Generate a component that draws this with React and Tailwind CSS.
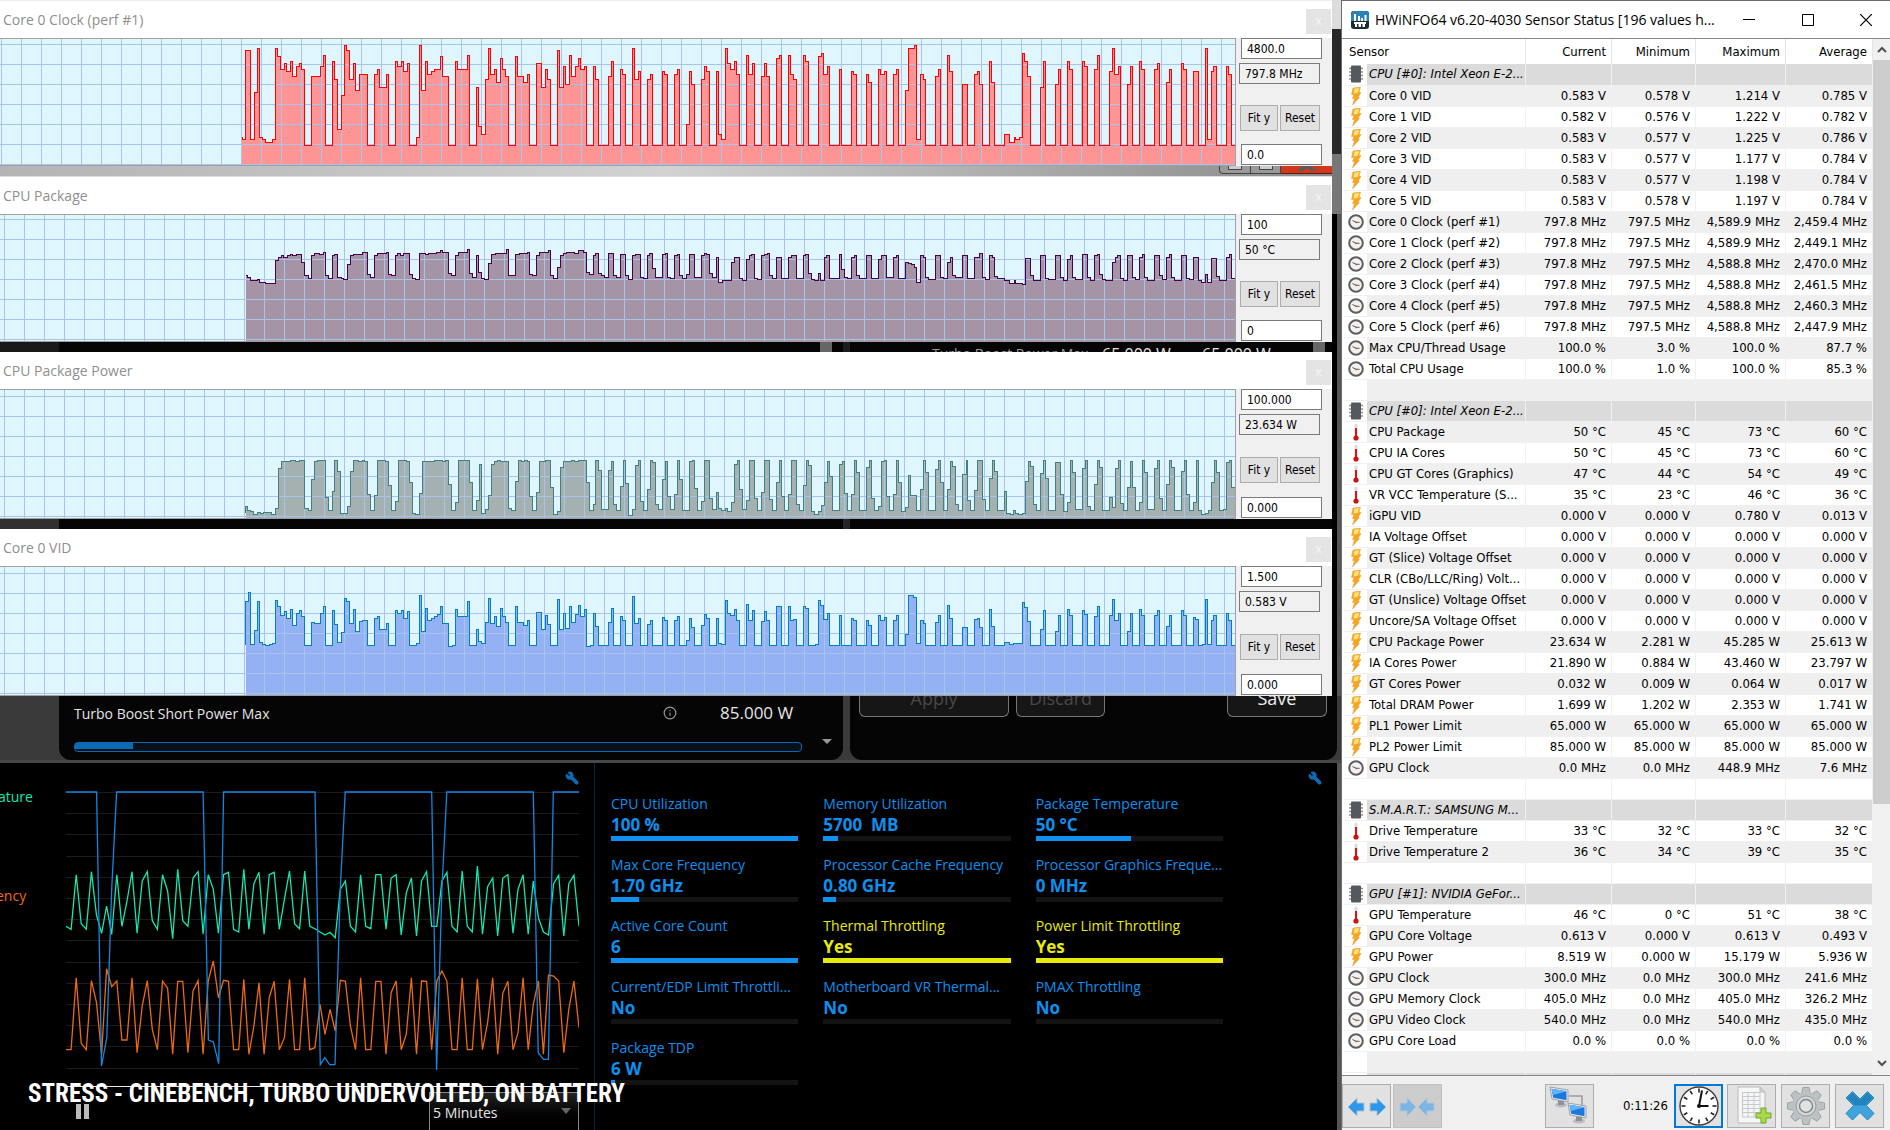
import React from 'react';
import { Wrench, Info } from 'lucide-react';

// One trace unit is 1/2.24 px across and 1/3 px down; HALF is where the second block of samples starts
const SCALE_X = 2.24;
const SCALE_Y = 3;
const HALF = 1434;
const PLOT_WIDTH = 1235;

const clockTrace = {
  first: [541,412, 543,418, 550,151, 561,418, 570,277, 577,145, 581,412, 588,418, 595,427, 611,418, 617,145, 621,169, 628,208, 637,190, 642,214, 651,184, 655,229, 664,199, 671,190, 676,208, 682,436, 698,229, 718,199, 725,166, 729,436, 745,184, 749,238, 756,388, 765,286, 772,136, 776,151, 783,238, 792,190, 796,271, 805,223, 823,436, 839,223, 845,208, 850,262, 866,223, 870,436, 886,184, 891,199, 899,184, 904,214, 913,190, 917,436, 933,412, 940,136, 944,271, 953,184, 957,223, 966,214, 973,208, 987,169, 991,229, 1005,436, 1020,184, 1025,208, 1047,166, 1052,436, 1067,262, 1072,379, 1078,403, 1088,238, 1094,145, 1099,223, 1108,208, 1112,247, 1121,175, 1125,208, 1132,229, 1139,436, 1155,169, 1159,229, 1173,247, 1181,223, 1186,436, 1202,190, 1213,262, 1222,208, 1226,238, 1233,436, 1249,151, 1253,262, 1262,199, 1267,253, 1276,166, 1280,229, 1289,199, 1296,175, 1300,208, 1309,199, 1314,436, 1329,199, 1334,238, 1341,436, 1363,229, 1370,184, 1374,436, 1390,208, 1394,223, 1401,436, 1417,145, 1421,238, 1430,214, 1435,436, 1450,238, 1457,223, 1461,436, 1484,214, 1488,223, 1495,436, 1511,223, 1517,208, 1522,436, 1538,373, 1544,214, 1549,253, 1556,436],
  second: [138,238, 144,199, 148,214, 156,436, 171,214, 176,403, 182,418, 191,145, 196,190, 203,208, 212,184, 216,223, 223,436, 238,166, 243,223, 252,190, 257,436, 272,229, 279,190, 283,229, 290,436, 305,175, 312,166, 317,436, 332,166, 337,223, 344,238, 351,436, 366,166, 371,184, 377,436, 400,169, 406,160, 411,223, 420,199, 424,436, 447,208, 451,436, 474,214, 478,223, 485,436, 507,223, 512,247, 518,436, 534,208, 539,223, 548,214, 552,436, 568,223, 574,208, 579,436, 595,271, 601,145, 614,136, 619,418, 628,223, 634,238, 640,436, 662,229, 668,208, 673,436, 689,166, 693,214, 700,436, 723,253, 734,436, 749,223, 756,214, 761,253, 767,436, 782,184, 787,247, 794,436, 816,403, 827,427, 838,412, 841,418, 850,412, 857,160, 861,184, 868,229, 875,436, 897,262, 904,184, 908,436, 931,253, 937,208, 942,436, 957,184, 962,208, 969,436, 991,184, 996,199, 1003,436, 1018,208, 1025,166, 1029,436, 1052,214, 1058,145, 1063,223, 1072,199, 1076,436, 1092,253, 1099,199, 1103,436, 1119,184, 1123,208, 1130,436, 1152,208, 1159,190, 1164,436, 1179,247, 1186,208, 1190,436, 1213,190, 1217,208, 1224,436, 1240,214, 1251,436, 1267,145, 1271,418, 1280,214, 1285,199, 1291,436, 1314,199, 1318,223, 1325,436],
};

const packageTrace = {
  first: [549,826, 554,832, 561,841, 577,838, 581,847, 595,850, 617,781, 624,772, 630,766, 635,772, 644,766, 651,763, 655,766, 664,763, 675,787, 682,826, 690,835, 698,766, 704,760, 716,763, 725,757, 729,826, 736,835, 745,766, 750,763, 756,832, 765,835, 770,838, 778,793, 785,766, 792,763, 802,763, 811,757, 823,823, 830,832, 839,766, 846,760, 866,757, 870,823, 877,826, 886,766, 891,760, 897,766, 904,760, 917,823, 924,835, 931,838, 940,760, 953,763, 960,760, 978,757, 987,751, 991,757, 1005,820, 1011,826, 1020,766, 1027,757, 1047,748, 1052,820, 1058,832, 1067,766, 1072,817, 1078,835, 1085,838, 1094,790, 1101,763, 1110,760, 1134,748, 1139,826, 1155,763, 1163,760, 1181,757, 1186,823, 1193,826, 1202,766, 1208,757, 1229,751, 1233,826, 1240,835, 1249,802, 1255,766, 1262,760, 1269,757, 1287,760, 1296,751, 1307,757, 1314,817, 1321,823, 1329,766, 1335,760, 1341,820, 1347,826, 1354,832, 1363,760, 1374,826, 1381,832, 1390,763, 1401,826, 1408,838, 1417,766, 1423,763, 1435,832, 1441,835, 1450,766, 1455,760, 1461,805, 1468,832, 1484,763, 1490,760, 1495,832, 1502,835, 1511,766, 1517,763, 1522,826, 1529,835, 1538,823, 1544,763, 1556,832],
  second: [138,766, 144,760, 149,763, 156,820, 162,832, 171,772, 176,847, 185,841, 196,841, 205,787, 212,772, 223,835, 230,841, 238,778, 245,766, 250,763, 257,835, 263,838, 272,766, 279,763, 285,760, 290,826, 297,835, 305,772, 317,835, 332,772, 339,766, 351,835, 366,766, 371,763, 377,820, 384,838, 391,841, 400,820, 404,841, 413,772, 418,766, 424,835, 447,763, 451,808, 458,832, 465,835, 474,772, 480,766, 485,826, 491,835, 507,766, 518,835, 534,778, 541,766, 552,832, 568,772, 574,766, 579,835, 595,787, 601,790, 607,793, 614,802, 619,847, 628,766, 634,772, 640,832, 646,838, 662,766, 673,832, 680,835, 689,787, 695,772, 700,826, 706,832, 723,766, 734,835, 749,772, 761,760, 767,832, 774,838, 782,766, 789,772, 794,829, 801,835, 816,841, 827,850, 838,841, 841,850, 857,853, 863,775, 875,826, 882,841, 897,766, 908,835, 914,838, 931,766, 942,832, 948,841, 957,778, 963,766, 969,832, 976,838, 991,763, 1003,832, 1009,841, 1018,766, 1025,763, 1029,823, 1036,838, 1042,841, 1058,787, 1065,772, 1070,766, 1076,835, 1083,841, 1092,766, 1103,832, 1110,838, 1119,772, 1125,763, 1130,832, 1137,841, 1152,766, 1164,826, 1170,838, 1179,772, 1186,763, 1190,832, 1197,841, 1213,766, 1224,835, 1231,838, 1240,772, 1251,841, 1257,847, 1267,823, 1271,847, 1280,775, 1291,829, 1298,841, 1314,772, 1320,763, 1325,835],
};

const powerTrace = {
  first: [549,517, 551,499, 554,511, 561,514, 568,523, 577,517, 583,520, 590,517, 608,523, 617,505, 624,385, 630,364, 651,361, 662,364, 671,361, 682,505, 690,511, 698,418, 704,364, 711,361, 729,472, 736,511, 745,454, 750,361, 756,394, 763,520, 778,499, 785,394, 792,361, 802,364, 811,361, 817,364, 823,463, 830,511, 839,466, 845,361, 864,364, 870,436, 877,511, 886,484, 893,361, 911,364, 917,427, 924,520, 931,523, 940,460, 946,364, 973,361, 991,364, 998,361, 1005,433, 1011,511, 1020,487, 1027,361, 1052,427, 1058,511, 1067,481, 1074,373, 1078,520, 1088,508, 1094,466, 1101,373, 1108,364, 1114,361, 1121,364, 1139,505, 1146,511, 1155,424, 1161,361, 1168,364, 1175,361, 1181,364, 1186,469, 1193,511, 1202,457, 1208,364, 1222,361, 1233,442, 1240,523, 1249,514, 1255,382, 1262,364, 1280,361, 1287,364, 1296,361, 1314,427, 1321,511, 1329,493, 1335,361, 1341,391, 1347,508, 1363,391, 1370,364, 1374,493, 1381,511, 1390,439, 1397,361, 1401,430, 1408,526, 1417,508, 1423,376, 1430,361, 1435,484, 1441,511, 1450,448, 1457,361, 1461,367, 1468,493, 1475,508, 1484,418, 1490,364, 1495,469, 1502,508, 1511,463, 1517,361, 1522,418, 1529,511, 1544,364, 1551,361, 1556,445, 1562,511],
  second: [138,484, 144,361, 156,475, 162,508, 171,457, 176,505, 182,511, 192,505, 196,514, 205,487, 212,373, 218,361, 223,448, 230,508, 238,481, 245,361, 257,475, 263,511, 272,457, 279,361, 290,478, 297,511, 305,427, 312,361, 317,469, 323,511, 332,463, 339,361, 351,493, 357,511, 366,436, 372,361, 377,376, 384,514, 391,523, 400,514, 406,496, 413,427, 419,364, 424,409, 431,511, 447,373, 453,364, 458,460, 465,511, 474,463, 480,361, 485,397, 491,511, 507,382, 514,361, 518,475, 525,511, 534,499, 541,364, 547,361, 552,469, 558,511, 568,463, 574,361, 579,427, 585,514, 595,502, 601,406, 606,466, 619,511, 628,448, 635,361, 640,397, 646,511, 662,388, 668,361, 673,427, 680,511, 689,448, 695,364, 700,379, 706,493, 713,511, 723,403, 730,361, 734,481, 740,511, 749,451, 756,361, 767,478, 774,511, 782,415, 789,361, 794,394, 801,511, 816,454, 821,520, 830,523, 837,511, 841,520, 848,523, 857,520, 863,424, 870,364, 875,379, 882,493, 888,511, 897,400, 904,361, 908,415, 915,511, 931,367, 942,463, 948,514, 957,487, 963,361, 969,397, 976,508, 991,385, 998,361, 1003,499, 1009,511, 1018,433, 1025,361, 1029,382, 1036,511, 1052,472, 1058,502, 1065,385, 1072,361, 1076,490, 1083,511, 1092,442, 1099,364, 1103,442, 1110,511, 1119,487, 1125,361, 1130,397, 1137,508, 1152,385, 1159,361, 1164,475, 1170,511, 1179,433, 1186,361, 1190,382, 1197,511, 1213,394, 1220,361, 1224,463, 1231,511, 1240,487, 1247,361, 1251,511, 1258,523, 1267,520, 1274,511, 1280,427, 1286,361, 1291,397, 1298,511, 1307,508, 1314,367, 1320,361, 1325,442],
};

const vidTrace = {
  first: [549,913, 550,784, 556,757, 561,913, 570,871, 577,784, 581,907, 588,913, 595,916, 604,913, 611,910, 617,781, 621,799, 628,826, 637,814, 642,835, 651,808, 655,856, 664,820, 671,811, 676,829, 682,916, 698,847, 704,850, 718,820, 725,799, 729,916, 745,811, 749,853, 756,907, 765,877, 772,775, 776,784, 783,850, 792,808, 796,874, 805,844, 812,841, 823,916, 839,835, 845,829, 850,868, 866,850, 870,916, 886,811, 891,820, 899,811, 904,835, 913,814, 917,916, 933,910, 940,766, 944,874, 953,805, 957,841, 966,835, 973,829, 980,823, 987,799, 991,850, 1005,919, 1013,916, 1020,808, 1025,829, 1047,784, 1052,916, 1067,868, 1072,904, 1078,910, 1088,847, 1094,775, 1099,850, 1108,829, 1112,859, 1121,805, 1125,829, 1132,847, 1139,916, 1155,799, 1159,847, 1173,856, 1181,841, 1186,916, 1202,817, 1213,868, 1222,826, 1226,853, 1233,916, 1249,778, 1253,868, 1262,820, 1267,865, 1276,799, 1280,847, 1289,823, 1296,796, 1300,829, 1309,808, 1314,919, 1323,916, 1329,820, 1334,859, 1341,916, 1363,847, 1370,805, 1374,916, 1390,829, 1394,841, 1401,916, 1417,769, 1421,850, 1430,835, 1435,916, 1450,853, 1457,841, 1461,916, 1484,832, 1488,841, 1495,916, 1511,841, 1517,829, 1522,916, 1538,901, 1544,835, 1549,862, 1556,916],
  second: [138,856, 144,823, 149,835, 156,916, 171,835, 176,910, 182,913, 191,781, 196,820, 203,826, 212,808, 216,841, 223,916, 238,793, 243,841, 252,811, 257,916, 272,844, 279,814, 283,841, 290,916, 305,799, 317,916, 332,799, 337,841, 344,838, 351,916, 366,799, 371,805, 377,916, 393,913, 400,781, 404,796, 411,838, 420,820, 424,916, 447,826, 451,916, 474,835, 478,841, 485,916, 507,841, 512,856, 518,916, 534,826, 539,841, 548,832, 552,916, 568,841, 574,826, 579,916, 595,883, 601,766, 613,772, 619,910, 628,841, 634,850, 640,916, 662,847, 668,826, 673,916, 689,796, 693,835, 700,916, 723,862, 734,916, 749,838, 756,835, 761,862, 767,916, 782,808, 787,859, 794,916, 816,907, 828,913, 837,910, 857,787, 861,802, 868,844, 875,916, 897,868, 904,811, 908,916, 931,874, 937,826, 942,916, 957,808, 962,826, 969,916, 991,811, 996,823, 1003,916, 1018,829, 1025,799, 1029,916, 1052,826, 1058,778, 1063,841, 1072,820, 1076,916, 1092,874, 1099,820, 1103,916, 1119,808, 1123,826, 1130,916, 1152,826, 1159,811, 1164,916, 1179,859, 1186,826, 1190,916, 1213,811, 1217,826, 1224,916, 1240,832, 1245,838, 1251,916, 1260,913, 1267,778, 1271,913, 1280,841, 1285,826, 1291,916, 1314,820, 1318,841, 1325,916],
};

const graphs = [
  { title: 'Core 0 Clock (perf #1)', max: '4800.0', value: '797.8 MHz', min: '0.0', trace: clockTrace, base: 117, height: 126, gridX: 1, gridY: 5, fill: '#ff9494', stroke: '#ff0000' },
  { title: 'CPU Package', max: '100', value: '50 °C', min: '0', trace: packageTrace, base: 645, height: 126, gridX: 4, gridY: 4, fill: '#a594a5', stroke: '#480048' },
  { title: 'CPU Package Power', max: '100.000', value: '23.634 W', min: '0.000', trace: powerTrace, base: 150, height: 128, gridX: 4, gridY: 6, fill: '#a5b1b1', stroke: '#408080' },
  { title: 'Core 0 VID', max: '1.500', value: '0.583 V', min: '0.000', trace: vidTrace, base: 681, height: 128, gridX: 4, gridY: 6, fill: '#94b1f3', stroke: '#0080c0' },
];

// Turn a trace into a stepped line in plot pixels
const stepPath = (trace, base) => {
  const all = [...trace.first, ...trace.second.map((n, i) => (i % 2 === 0 ? n + HALF : n))];
  let d = '';
  for (let i = 0; i < all.length; i += 2) {
    const x = Math.floor(all[i] / SCALE_X) + 0.5;
    const y = Math.floor((all[i + 1] - base) / SCALE_Y) + 0.5;
    d += i === 0 ? `M${x} ${y}` : `H${x}V${y}`;
  }
  return { line: `${d}H${PLOT_WIDTH}`, left: Math.floor(all[0] / SCALE_X) + 0.5 };
};

const Plot = ({ graph }) => {
  const { trace, base, height, gridX, gridY, fill, stroke } = graph;
  const { line, left } = stepPath(trace, base);
  const columns = Array.from({ length: 62 }, (_, i) => gridX + i * 20);
  const rows = Array.from({ length: 7 }, (_, i) => gridY + i * 20);
  return (
    <svg
      className="block w-full bg-[#dff6fe]"
      height={height}
      viewBox={`0 0 ${PLOT_WIDTH} ${height}`}
      preserveAspectRatio="none"
      shapeRendering="crispEdges"
    >
      <path d={`${line}V${height}H${left}Z`} fill={fill} />
      {columns.map((x) => (
        <rect key={x} x={x} y="0" width="1" height={height} fill="#a9c4ea" />
      ))}
      {rows.map((y) => (
        <rect key={y} x="0" y={y} width={PLOT_WIDTH} height="1" fill="#a9c4ea" />
      ))}
      <path d={line} fill="none" stroke={stroke} />
    </svg>
  );
};

const GraphWindow = ({ graph }) => (
  <section className="bg-white">
    <div className="flex h-[37px] items-center justify-between pl-[3px] font-['Open_Sans',sans-serif]">
      <h2 className="text-[14px] text-[#8f8f8f]">{graph.title}</h2>
      <button aria-label="Close" className="mt-1 mr-px h-[25px] w-[25px] bg-[#e4e4e4] pb-0.5 text-[12px] text-[#f6f6f6]">x</button>
    </div>
    <div className="flex bg-[#f0f0f0]">
      <div className="min-w-0 flex-1 border-y border-r border-[#a0a0a0]">
        <Plot graph={graph} />
      </div>
      <div className="flex w-[96px] shrink-0 flex-col justify-between pr-3 pb-px pl-[3px] text-[12px]">
        <div>
          <input aria-label={`${graph.title} maximum`} defaultValue={graph.max} className="ml-0.5 block h-[21px] w-[81px] border border-[#7a7a7a] bg-white px-[5px] text-black" />
          <input aria-label={`${graph.title} value`} readOnly value={graph.value} className="mt-1 block h-[21px] w-[81px] border border-[#7a7a7a] bg-[#f0f0f0] px-[5px] text-black" />
        </div>
        <div className="mt-2 ml-px flex gap-0.5">
          <button className="h-[26px] w-[38px] border border-[#adadad] bg-[#e1e1e1]">Fit y</button>
          <button className="h-[26px] w-10 border border-[#adadad] bg-[#e1e1e1]">Reset</button>
        </div>
        <input aria-label={`${graph.title} minimum`} defaultValue={graph.min} className="ml-0.5 block h-[21px] w-[81px] border border-[#7a7a7a] bg-white px-[5px] text-black" />
      </div>
    </div>
  </section>
);

// Parts of the windows behind that show between the graph windows
const GlassStrip = () => (
  <div className="flex h-[11px] justify-end overflow-hidden border-b border-[#dcdcdc] bg-linear-to-r from-[#b4b4b4] via-[#d2d2d2] to-[#8a8a8a]">
    <div className="h-2 w-8 rounded-bl border border-t-0 border-[#444] bg-[#999]">
      <div className="mx-auto h-1 w-3.5 border border-t-0 border-[#444] bg-[#ccc]" />
    </div>
    <div className="h-2 w-[30px] border-r border-b border-[#444] bg-[#999]">
      <div className="mx-auto h-1 w-3.5 border border-t-0 border-[#444] bg-[#ccc]" />
    </div>
    <div className="h-2 w-[51px] border-b border-[#5a1a10] bg-[#d0381c]">
      <svg className="mx-auto block" width="20" height="5" viewBox="0 0 20 5">
        <path d="M0 5L6 0H14L20 5H14L10 2L6 5Z" fill="#5b5b5b" />
      </svg>
    </div>
  </div>
);

const PowerStrip = () => (
  <div className="flex h-2.5 overflow-hidden bg-[#050505] font-['Open_Sans',sans-serif] text-[16px] leading-5 text-[#e5e5e5]">
    <div className="w-[59px] bg-[#181818]" />
    <div className="flex-1" />
    <div className="w-3 bg-[#666]" />
    <div className="w-[11px]" />
    <div className="w-[7px] bg-[#1c1c1c]" />
    <div className="w-[82px]" />
    <div className="w-[170px] pt-0.5 text-[14px] text-[#999]">Turbo Boost Power Max</div>
    <div className="w-[100px] pt-0.5">65.000 W</div>
    <div className="w-[111px] pt-0.5">65.000 W</div>
    <div className="w-3 bg-[#666]" />
    <div className="w-[7px]" />
  </div>
);

const DarkStrip = () => (
  <div className="flex h-2.5 overflow-hidden bg-[#050505]">
    <div className="w-[59px] bg-[#303030]" />
    <div className="flex-1" />
    <div className="w-[7px] bg-[#262626]" />
    <div className="w-[482px]" />
  </div>
);

const teal = [711,720,556,703,720,547,677,732,650,735,556,711,635,547,732,575,547,694,720,556,605,748,540,694,711,566,547,735,556,600,732,556,549,720,728,540,720,583,549,735,556,549,720,630,545,703,718,545,711,718,728,737,729,745,600,575,711,728,556,711,718,556,556,720,566,556,737,610,566,740,575,547,711,711,575,549,711,728,545,711,728,530,735,592,566,740,566,556,732,600,556,735,575,685,728,737,583,558,740,583,558,711];
const orange = [1081,1081,865,1062,1081,874,940,1095,838,892,875,1052,1052,865,1090,950,874,1020,1081,875,897,1095,876,876,1090,905,874,1095,875,815,925,873,876,1081,1081,870,1095,1010,880,1095,925,876,1081,1045,870,1081,1081,865,1081,1075,945,1035,960,1025,873,876,1010,1081,865,1081,1081,876,876,1095,910,875,1081,1035,865,1095,875,876,1081,875,845,876,1081,1081,865,1081,1081,868,1081,1000,865,1095,912,876,1081,1030,865,1081,945,875,1095,857,860,875,1090,960,875,1015];
const blue = [[162,308],[237,308],[249,1130],[262,1045],[274,600],[286,308],[498,308],[511,1052],[523,1058],[536,1123],[548,308],[772,308],[785,1126],[796,1105],[808,1126],[821,1126],[834,600],[846,308],[1058,308],[1070,1142],[1083,600],[1095,308],[1307,308],[1319,1090],[1332,1110],[1344,1110],[1356,308],[1419,308]];

const toY = (v) => ((v - 308) / 3 + 1).toFixed(1);
const series = (values) => values.map((v, i) => `${((i * 513) / (values.length - 1)).toFixed(1)},${toY(v)}`).join(' ');

const HistoryChart = () => (
  <svg className="block w-full" height="297" viewBox="0 0 513 297" preserveAspectRatio="none" fill="none">
    {Array.from({ length: 14 }, (_, i) => (
      <rect key={i} x="0" y={Math.round(1 + i * 21.2)} width="513" height="1" fill="#1c1c1c" />
    ))}
    <rect x="0" y="295" width="513" height="1" fill="#e8e8e8" />
    <polyline points={series(orange)} stroke="#ee6a11" strokeWidth="1.3" />
    <polyline points={series(teal)} stroke="#12e8b0" strokeWidth="1.3" />
    <polyline points={blue.map(([x, y]) => `${((x - 162) / 2.45).toFixed(1)},${toY(y)}`).join(' ')} stroke="#1487e0" strokeWidth="1.3" />
  </svg>
);

const metrics = [
  { name: 'CPU Utilization', value: '100 %', level: 100 },
  { name: 'Memory Utilization', value: '5700  MB', level: 8 },
  { name: 'Package Temperature', value: '50 °C', level: 51 },
  { name: 'Max Core Frequency', value: '1.70 GHz', level: 15 },
  { name: 'Processor Cache Frequency', value: '0.80 GHz', level: 7 },
  { name: 'Processor Graphics Freque...', value: '0 MHz', level: 0 },
  { name: 'Active Core Count', value: '6', level: 100 },
  { name: 'Thermal Throttling', value: 'Yes', level: 100, warn: true },
  { name: 'Power Limit Throttling', value: 'Yes', level: 100, warn: true },
  { name: 'Current/EDP Limit Throttli...', value: 'No', level: 0 },
  { name: 'Motherboard VR Thermal...', value: 'No', level: 0 },
  { name: 'PMAX Throttling', value: 'No', level: 0 },
  { name: 'Package TDP', value: '6 W', level: 2 },
];

const Metric = ({ metric }) => (
  <div className={metric.warn ? 'h-[61px] text-[#e8ea0c]' : 'h-[61px] text-[#0d90ee]'}>
    <div className="h-[21px] text-[14px] leading-[21px] whitespace-nowrap">{metric.name}</div>
    <div className="h-[22px] text-[17px] leading-[22px] font-bold whitespace-pre">{metric.value}</div>
    <div className="h-[5px] bg-[#141414]">
      <div className="h-full bg-current" style={{ width: `${metric.level}%` }} />
    </div>
  </div>
);

const TuningPanel = () => (
  <div className="flex min-h-0 flex-1 flex-col bg-black font-['Open_Sans',sans-serif]">
    <div className="flex h-[67px] shrink-0 border-b-3 border-[#484848] bg-[#3a3a3a] pr-1">
      <div className="w-[59px]" />
      <div className="flex flex-1 rounded-b-xl bg-[#050505] pl-[15px]">
        <div className="flex-1">
          <div className="flex h-[46px] items-center pb-3 text-[14px] text-[#e4e4e4]">
            <label htmlFor="short-power" className="flex-1">Turbo Boost Short Power Max</label>
            <Info size={14} strokeWidth={2} className="mr-[43px] text-[#999]" />
            <span className="w-[82px] text-[17px]">85.000 W</span>
          </div>
          <div className="relative h-2.5 rounded-sm border border-[#0c69b4] bg-[#04101a]">
            <div className="h-[6px] w-[8%] bg-[#0c69b4]" />
            <input id="short-power" type="range" min="0" max="1000" defaultValue="85" className="absolute inset-0 w-full opacity-0" />
          </div>
        </div>
        <div className="flex w-[41px] items-end justify-center pb-4 pl-2">
          <div className="h-0 w-0 border-x-[5px] border-t-[5px] border-x-transparent border-t-[#999]" />
        </div>
      </div>
      <div className="w-[7px]" />
      <div className="flex w-[487px] items-start rounded-b-xl bg-[#050505] pr-2.5 pl-[9px] text-[18px]">
        <button className="h-[21px] w-[150px] overflow-hidden rounded-b-md border border-t-0 border-[#777] bg-[#161616] pb-4 leading-[4px] text-[#484848]">Apply</button>
        <button className="ml-[7px] h-[21px] w-[89px] overflow-hidden rounded-b-md border border-t-0 border-[#777] bg-[#161616] pb-4 leading-[4px] text-[#484848]">Discard</button>
        <button className="ml-auto h-[21px] w-[100px] overflow-hidden rounded-b-md border border-t-0 border-[#777] bg-[#161616] pb-4 leading-[4px] text-[#eee]">Save</button>
      </div>
    </div>

    <div className="flex min-h-0 flex-1 overflow-hidden border-r-4 border-[#555]">
      {/* History graph */}
      <div className="relative flex flex-1 border-r border-[#06263c]">
        <div className="w-[66px] overflow-hidden pt-[26px] text-[14px] leading-4">
          <div className="-ml-0.5 text-[#12e8b0]">ature</div>
          <div className="-ml-1 pt-[83px] text-[#ee6a11]">ency</div>
        </div>
        <div className="flex-1 pr-[15px]">
          <div className="flex h-7 justify-end pt-2">
            <button aria-label="Graph settings" className="h-[14px] text-[#0b6cb5]">
              <Wrench size={14} fill="currentColor" className="-scale-x-100" />
            </button>
          </div>
          <HistoryChart />
          <div className="flex items-start justify-between pt-1">
            <button aria-label="Pause" className="mt-3 ml-2.5 flex gap-[3px]">
              <span className="h-[15px] w-[5px] bg-[#bbb]" />
              <span className="h-[15px] w-[5px] bg-[#bbb]" />
            </button>
            <div className="relative">
              <select aria-label="Time span" className="block h-10 w-[150px] appearance-none border border-[#888] bg-black bg-linear-to-b from-[#222] to-black pl-[3px] text-[14px] text-[#e8e8e8]">
                <option>5 Minutes</option>
              </select>
              <div className="pointer-events-none absolute top-4 right-2 h-0 w-0 border-x-[5px] border-t-[6px] border-x-transparent border-t-[#666]" />
            </div>
          </div>
        </div>
        <p className="absolute bottom-5 left-7 font-['Liberation_Sans_Narrow','Roboto_Condensed','Open_Sans_Condensed',sans-serif] text-[25px] leading-8 font-bold whitespace-nowrap text-white">
          STRESS - CINEBENCH, TURBO UNDERVOLTED, ON BATTERY
        </p>
      </div>

      {/* Monitors */}
      <div className="w-[742px] pl-4">
        <div className="flex h-[30px] justify-end pt-2 pr-[15px]">
          <button aria-label="Monitor settings" className="h-[14px] text-[#0b6cb5]">
            <Wrench size={14} fill="currentColor" className="-scale-x-100" />
          </button>
        </div>
        <div className="grid w-[612px] grid-cols-3 gap-x-[25px]">
          {metrics.map((metric) => (
            <Metric key={metric.name} metric={metric} />
          ))}
        </div>
      </div>
    </div>
  </div>
);

const icons = {
  chip: (
    <>
      <path d="M1 3.5H15M1 7H15M1 10.5H15M1 14H15" stroke="#8e8e8e" strokeWidth="1.6" />
      <rect x="3" y="0.5" width="10" height="17" rx="1" fill="#55585c" />
    </>
  ),
  volt: (
    <>
      <path d="M5 1L12.5 0L11 5.5L13 5.5L10 10.5H11.5L4.5 18L6.500 11.5H4.500L6 7.500H3.500Z" fill="#f7a61b" stroke="#e09a3c" strokeWidth="0.5" />
      <path d="M6.500 1.500L11.500 1L9.500 6L5.500 6.500Z" fill="#ffe27a" />
    </>
  ),
  clock: (
    <>
      <circle cx="8" cy="9" r="6.8" fill="#f1f1f1" stroke="#5e5e5e" strokeWidth="2" />
      <path d="M4.5 7.5L8 9.3H11.500" fill="none" stroke="#555" strokeWidth="1" />
      <circle cx="8" cy="9.3" r="0.9" fill="#c65a3a" />
    </>
  ),
  temp: (
    <>
      <rect x="6.5" y="0.5" width="3" height="14" rx="1.5" fill="#dcdcdc" />
      <rect x="7" y="5" width="2" height="9" fill="#d01818" />
      <circle cx="8" cy="15" r="2.6" fill="#cc1111" />
    </>
  ),
};

const rows = [
  { icon: 'chip', group: true, cells: ['CPU [#0]: Intel Xeon E-2...'] },
  { icon: 'volt', cells: ['Core 0 VID', '0.583 V', '0.578 V', '1.214 V', '0.785 V'] },
  { icon: 'volt', cells: ['Core 1 VID', '0.582 V', '0.576 V', '1.222 V', '0.782 V'] },
  { icon: 'volt', cells: ['Core 2 VID', '0.583 V', '0.577 V', '1.225 V', '0.786 V'] },
  { icon: 'volt', cells: ['Core 3 VID', '0.583 V', '0.577 V', '1.177 V', '0.784 V'] },
  { icon: 'volt', cells: ['Core 4 VID', '0.583 V', '0.577 V', '1.198 V', '0.784 V'] },
  { icon: 'volt', cells: ['Core 5 VID', '0.583 V', '0.578 V', '1.197 V', '0.784 V'] },
  { icon: 'clock', cells: ['Core 0 Clock (perf #1)', '797.8 MHz', '797.5 MHz', '4,589.9 MHz', '2,459.4 MHz'] },
  { icon: 'clock', cells: ['Core 1 Clock (perf #2)', '797.8 MHz', '797.5 MHz', '4,589.9 MHz', '2,449.1 MHz'] },
  { icon: 'clock', cells: ['Core 2 Clock (perf #3)', '797.8 MHz', '797.5 MHz', '4,588.8 MHz', '2,470.0 MHz'] },
  { icon: 'clock', cells: ['Core 3 Clock (perf #4)', '797.8 MHz', '797.5 MHz', '4,588.8 MHz', '2,461.5 MHz'] },
  { icon: 'clock', cells: ['Core 4 Clock (perf #5)', '797.8 MHz', '797.5 MHz', '4,588.8 MHz', '2,460.3 MHz'] },
  { icon: 'clock', cells: ['Core 5 Clock (perf #6)', '797.8 MHz', '797.5 MHz', '4,588.8 MHz', '2,447.9 MHz'] },
  { icon: 'clock', cells: ['Max CPU/Thread Usage', '100.0 %', '3.0 %', '100.0 %', '87.7 %'] },
  { icon: 'clock', cells: ['Total CPU Usage', '100.0 %', '1.0 %', '100.0 %', '85.3 %'] },
  { cells: [] },
  { icon: 'chip', group: true, cells: ['CPU [#0]: Intel Xeon E-2...'] },
  { icon: 'temp', cells: ['CPU Package', '50 °C', '45 °C', '73 °C', '60 °C'] },
  { icon: 'temp', cells: ['CPU IA Cores', '50 °C', '45 °C', '73 °C', '60 °C'] },
  { icon: 'temp', cells: ['CPU GT Cores (Graphics)', '47 °C', '44 °C', '54 °C', '49 °C'] },
  { icon: 'temp', cells: ['VR VCC Temperature (S...', '35 °C', '23 °C', '46 °C', '36 °C'] },
  { icon: 'volt', cells: ['iGPU VID', '0.000 V', '0.000 V', '0.780 V', '0.013 V'] },
  { icon: 'volt', cells: ['IA Voltage Offset', '0.000 V', '0.000 V', '0.000 V', '0.000 V'] },
  { icon: 'volt', cells: ['GT (Slice) Voltage Offset', '0.000 V', '0.000 V', '0.000 V', '0.000 V'] },
  { icon: 'volt', cells: ['CLR (CBo/LLC/Ring) Volt...', '0.000 V', '0.000 V', '0.000 V', '0.000 V'] },
  { icon: 'volt', cells: ['GT (Unslice) Voltage Offset', '0.000 V', '0.000 V', '0.000 V', '0.000 V'] },
  { icon: 'volt', cells: ['Uncore/SA Voltage Offset', '0.000 V', '0.000 V', '0.000 V', '0.000 V'] },
  { icon: 'volt', cells: ['CPU Package Power', '23.634 W', '2.281 W', '45.285 W', '25.613 W'] },
  { icon: 'volt', cells: ['IA Cores Power', '21.890 W', '0.884 W', '43.460 W', '23.797 W'] },
  { icon: 'volt', cells: ['GT Cores Power', '0.032 W', '0.009 W', '0.064 W', '0.017 W'] },
  { icon: 'volt', cells: ['Total DRAM Power', '1.699 W', '1.202 W', '2.353 W', '1.741 W'] },
  { icon: 'volt', cells: ['PL1 Power Limit', '65.000 W', '65.000 W', '65.000 W', '65.000 W'] },
  { icon: 'volt', cells: ['PL2 Power Limit', '85.000 W', '85.000 W', '85.000 W', '85.000 W'] },
  { icon: 'clock', cells: ['GPU Clock', '0.0 MHz', '0.0 MHz', '448.9 MHz', '7.6 MHz'] },
  { cells: [] },
  { icon: 'chip', group: true, cells: ['S.M.A.R.T.: SAMSUNG M...'] },
  { icon: 'temp', cells: ['Drive Temperature', '33 °C', '32 °C', '33 °C', '32 °C'] },
  { icon: 'temp', cells: ['Drive Temperature 2', '36 °C', '34 °C', '39 °C', '35 °C'] },
  { cells: [] },
  { icon: 'chip', group: true, cells: ['GPU [#1]: NVIDIA GeFor...'] },
  { icon: 'temp', cells: ['GPU Temperature', '46 °C', '0 °C', '51 °C', '38 °C'] },
  { icon: 'volt', cells: ['GPU Core Voltage', '0.613 V', '0.000 V', '0.613 V', '0.493 V'] },
  { icon: 'volt', cells: ['GPU Power', '8.519 W', '0.000 W', '15.179 W', '5.936 W'] },
  { icon: 'clock', cells: ['GPU Clock', '300.0 MHz', '0.0 MHz', '300.0 MHz', '241.6 MHz'] },
  { icon: 'clock', cells: ['GPU Memory Clock', '405.0 MHz', '0.0 MHz', '405.0 MHz', '326.2 MHz'] },
  { icon: 'clock', cells: ['GPU Video Clock', '540.0 MHz', '0.0 MHz', '540.0 MHz', '435.0 MHz'] },
  { icon: 'clock', cells: ['GPU Core Load', '0.0 %', '0.0 %', '0.0 %', '0.0 %'] },
  { cells: [] },
  { group: true, cells: [] },
];

const rowColor = (row, index) => {
  if (row.group) return 'bg-[#dbdbdb]';
  return index % 2 === 1 ? 'bg-[#efefef]' : 'bg-white';
};

const SensorTable = () => (
  <table className="w-full table-fixed border-collapse text-[13px] leading-5 text-black">
    <colgroup>
      <col className="w-6" />
      <col />
      <col className="w-[86px]" />
      <col className="w-[84px]" />
      <col className="w-[90px]" />
      <col className="w-[87px]" />
    </colgroup>
    <thead>
      <tr className="h-[25px] bg-white">
        <th colSpan={2} className="border-r border-[#e5e5e5] p-0 pl-1.5 text-left font-normal">Sensor</th>
        {['Current', 'Minimum', 'Maximum', 'Average'].map((name) => (
          <th key={name} className="border-r border-[#e5e5e5] p-0 pr-[5px] text-right font-normal">{name}</th>
        ))}
      </tr>
    </thead>
    <tbody>
      {rows.map((row, index) => (
        <tr key={index} className={`h-[21px] ${rowColor(row, index)}`}>
          <td className="border-b border-[#f0f0f0] bg-white p-0 pl-[5px]">
            {row.icon && (
              <svg className="block" width="16" height="18" viewBox="0 0 16 18">{icons[row.icon]}</svg>
            )}
          </td>
          <td className={`border-r border-b border-[#f0f0f0] p-0 pl-0.5 whitespace-nowrap ${row.group ? 'italic' : ''}`}>
            {row.cells[0]}
          </td>
          {[1, 2, 3, 4].map((n) => (
            <td key={n} className="border-r border-b border-[#f0f0f0] p-0 pr-[5px] text-right whitespace-nowrap">{row.cells[n]}</td>
          ))}
        </tr>
      ))}
    </tbody>
  </table>
);

const ToolButton = ({ label, className = 'border border-[#adadad] bg-[#e1e1e1]', children }) => (
  <button aria-label={label} className={`flex h-11 w-[49px] items-center justify-center ${className}`}>
    <svg width="44" height="40" viewBox="0 0 44 40">{children}</svg>
  </button>
);

const Screen = ({ x, y }) => (
  <g transform={`translate(${x} ${y})`}>
    <ellipse cx="11" cy="18" rx="6" ry="2.5" fill="#b9bcc0" />
    <path d="M8 13L14 14V18H8Z" fill="#8d9196" />
    <path d="M0 0L18 3V15L2 12Z" fill="#e9edf0" stroke="#8a9096" strokeWidth="0.8" />
    <path d="M1.5 1.8L16.5 4.3V13.2L3.2 10.8Z" fill="#1c78dc" />
    <path d="M1.5 1.8L16.5 4.3L3 8Z" fill="#63b4f6" />
  </g>
);

const ticks = Array.from({ length: 12 }, (_, i) => i * 30);
const teeth = Array.from({ length: 8 }, (_, i) => i * 45);

const Toolbar = () => (
  <div className="flex h-[54px] shrink-0 items-center bg-[#f0f0f0] pt-[5px] pr-1.5">
    <ToolButton label="Expand columns">
      <path d="M3 21L12 12V17H19V25H12V30ZM41 21L32 12V17H25V25H32V30Z" fill="#2f97ea" stroke="#a9c3d8" />
    </ToolButton>
    <div className="w-0.5" />
    <ToolButton label="Shrink columns" className="border border-[#bfbfbf] bg-[#cccccc]">
      <path d="M20 21L11 12V17H4V25H11V30ZM22 21L31 12V17H38V25H31V30Z" fill="#7cb5e4" stroke="#b3c6d6" />
    </ToolButton>
    <div className="flex-1" />
    <ToolButton label="Remote monitoring">
      <path d="M21 10H34V20" fill="none" stroke="#9a9a9a" strokeWidth="1.5" />
      <Screen x={2} y={1} />
      <Screen x={20} y={17} />
    </ToolButton>
    <span className="w-[80px] pr-1.5 text-right text-[13px] text-black">0:11:26</span>
    <ToolButton label="Reset timer" className="border-2 border-[#0078d7] bg-[#e1e1e1]">
      <circle cx="22" cy="20" r="19" fill="#fff" stroke="#3b3b3b" strokeWidth="1.4" />
      {ticks.map((a) => (
        <path key={a} d="M22 2.5V6.5" stroke="#222" strokeWidth="1.6" transform={`rotate(${a} 22 20)`} />
      ))}
      <path d="M22 20L25 4.5M22 20H31.5" stroke="#111" strokeWidth="2" />
      <circle cx="22" cy="20" r="2" fill="#111" />
    </ToolButton>
    <div className="w-1" />
    <ToolButton label="Start logging">
      <path d="M8 1H30L35 6V37H8Z" fill="#f5f6f6" stroke="#b5b8ba" />
      <path d="M30 1V6H35Z" fill="#d4d6d8" stroke="#b5b8ba" />
      <path d="M12.5 6.5H30V31H12.5ZM12.5 10.5H30M12.5 14.5H30M12.5 18.5H30M12.5 22.5H30M12.5 26.5H30M18 6.5V31M24 6.5V31" fill="none" stroke="#c6c9cc" />
      <path d="M31 22H36V27H41V32H36V37H31V32H26V27H31Z" fill="#a9d84a" stroke="#6fa52a" />
    </ToolButton>
    <div className="w-[5px]" />
    <ToolButton label="Settings">
      <g stroke="#8f9598" strokeWidth="0.8" fill="#bcc2c4">
        {teeth.map((a) => (
          <path key={a} d="M17.500 8L19 1.500H25L26.500 8Z" transform={`rotate(${a} 22 20)`} />
        ))}
      </g>
      <circle cx="22" cy="20" r="14" fill="#bcc2c4" />
      <circle cx="22" cy="20" r="10" fill="#d4d8da" stroke="#979da0" />
      <circle cx="22" cy="20" r="6.500" fill="#e1e1e1" stroke="#7f8588" strokeWidth="1.400" />
    </ToolButton>
    <div className="w-[5px]" />
    <ToolButton label="Close sensors">
      <path d="M14.5 5.5L22 13L29.5 5.5L36 12L28.5 19.5L36 27.5L29.5 34L22 26.5L14.5 34L8 27.5L15.5 19.5L8 12Z" fill="#3fa3dc" stroke="#2a86bf" />
      <path d="M14.5 6.5L22 14L29.5 6.5L35 12L27 19.5H17L9 12Z" fill="#2284bd" />
    </ToolButton>
  </div>
);

const SensorWindow = () => (
  <section className="flex w-[549px] shrink-0 flex-col overflow-hidden border-t border-l border-[#6b6b6b] bg-white font-['DejaVu_Sans_Condensed','DejaVu_Sans',sans-serif]">
    <header className="flex h-[38px] shrink-0 items-center border-b border-[#828790] pl-[9px] font-['Open_Sans',sans-serif]">
      <svg width="18" height="18" viewBox="0 0 18 18">
        <rect width="18" height="18" rx="3" fill="#1c2a33" />
        <path d="M0 3Q0 0 3 0H15Q18 0 18 3V10H0Z" fill="#2c82b4" />
        <path d="M4 3V10M8 5V10M11 7V10M14.5 4V10" stroke="#fff" strokeWidth="2" />
        <path d="M3 11H15V13H14V16H11.5V13H10V16H7.5V13H6V16H4V13H3Z" fill="#fff" />
      </svg>
      <h1 className="flex-1 pl-1.5 text-[14px] whitespace-nowrap text-black">HWiNFO64 v6.20-4030 Sensor Status [196 values h...</h1>
      <div className="flex w-[147px] items-center justify-between pr-[18px] text-black">
        <button aria-label="Minimize" className="h-3 w-3">
          <svg width="12" height="12" viewBox="0 0 12 12"><path d="M0 5.5H12" stroke="#000" /></svg>
        </button>
        <button aria-label="Maximize" className="h-3 w-3">
          <svg width="12" height="12" viewBox="0 0 12 12"><path d="M0.5 0.5H11.5V11.5H0.5Z" fill="none" stroke="#000" /></svg>
        </button>
        <button aria-label="Close" className="h-3 w-3">
          <svg width="12" height="12" viewBox="0 0 12 12"><path d="M0 0L12 12M12 0L0 12" stroke="#000" strokeWidth="1.2" /></svg>
        </button>
      </div>
    </header>
    <div className="flex min-h-0 flex-1 overflow-hidden border-b border-[#828790] pl-px">
      <div className="min-w-0 flex-1">
        <SensorTable />
      </div>
      <div className="flex w-[17px] flex-col bg-[#f0f0f0]">
        <svg className="block" width="17" height="21" viewBox="0 0 17 21">
          <path d="M5 13L9 9L13 13" fill="none" stroke="#505050" strokeWidth="2" />
        </svg>
        <div className="h-[744px] bg-[#cdcdcd]" />
        <div className="flex-1" />
        <svg className="block" width="17" height="21" viewBox="0 0 17 21">
          <path d="M5 7L9 11L13 7" fill="none" stroke="#505050" strokeWidth="2" />
        </svg>
      </div>
    </div>
    <Toolbar />
  </section>
);

export default function App() {
  return (
    <div className="flex h-screen overflow-hidden bg-black">
      <main className="flex min-w-0 flex-1 flex-col overflow-hidden">
        <div className="flex shrink-0">
          <div className="min-w-0 flex-1 border-t border-[#eeeeee] font-['DejaVu_Sans_Condensed','DejaVu_Sans',sans-serif]">
            <GraphWindow graph={graphs[0]} />
            <GlassStrip />
            <GraphWindow graph={graphs[1]} />
            <PowerStrip />
            <GraphWindow graph={graphs[2]} />
            <DarkStrip />
            <GraphWindow graph={graphs[3]} />
          </div>
          <div className="flex w-[9px] flex-col">
            <div className="h-[29px] bg-[#dcdcdc]" />
            <div className="h-[125px] bg-[#282828]" />
            <div className="h-[60px] bg-[#777]" />
            <div className="flex-1 border-r-4 border-[#555] bg-black" />
          </div>
        </div>
        <TuningPanel />
      </main>
      <SensorWindow />
    </div>
  );
}
